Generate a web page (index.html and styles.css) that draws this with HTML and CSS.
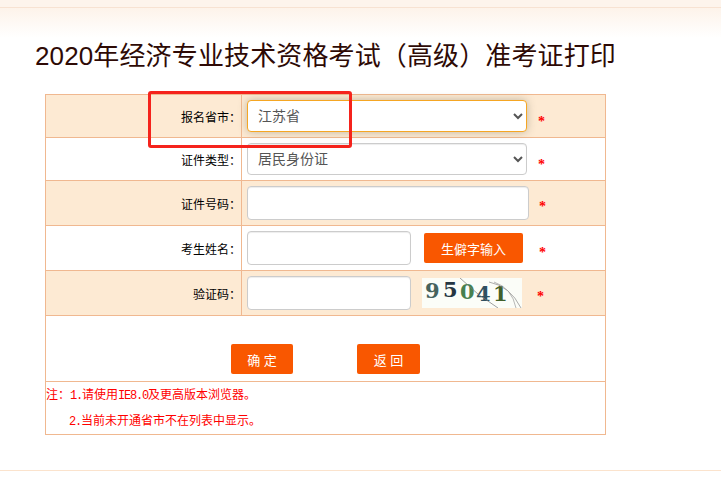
FILE: index.html
```html
<!DOCTYPE html>
<html>
<head>
    <meta charset="utf-8" />
    <title>准考证打印</title>
    <link rel="stylesheet" href="styles.css">
</head>
<body>
    <div class="top_bar"></div>
    <div class="main">
        <h1 class="title">2020年经济专业技术资格考试（高级）准考证打印</h1>
        <table class="form_tb">
            <tr class="row_a odd">
                <td class="lbl">报名省市：</td>
                <td>
                    <div class="field">
                        <select class="sel sel_on"><option>江苏省</option></select>
                        <span class="star star_a">*</span>
                    </div>
                </td>
            </tr>
            <tr class="row_a">
                <td class="lbl">证件类型：</td>
                <td>
                    <div class="field">
                        <select class="sel"><option>居民身份证</option></select>
                        <span class="star star_a">*</span>
                    </div>
                </td>
            </tr>
            <tr class="row_b odd">
                <td class="lbl">证件号码：</td>
                <td>
                    <div class="field">
                        <input class="txt txt_long" type="text" />
                        <span class="star star_b">*</span>
                    </div>
                </td>
            </tr>
            <tr class="row_c">
                <td class="lbl">考生姓名：</td>
                <td>
                    <div class="field">
                        <input class="txt" type="text" />
                        <button class="btn btn_rare" type="button">生僻字输入</button>
                        <span class="star star_c">*</span>
                    </div>
                </td>
            </tr>
            <tr class="row_c odd">
                <td class="lbl">验证码：</td>
                <td>
                    <div class="field">
                        <input class="txt" type="text" />
                        <svg class="captcha" width="100" height="30" viewBox="0 0 100 30">
                            <rect width="100" height="30" fill="#fbfdf8" />
                            <text x="3" y="20" fill="#46625c">9</text>
                            <text x="21" y="19" fill="#263642">5</text>
                            <text x="38" y="21" fill="#47804f">0</text>
                            <text x="54" y="23" fill="#2f5060">4</text>
                            <text x="71" y="23" fill="#41602a">1</text>
                            <path d="M38 0 Q56 18 76 30" fill="none" stroke="#777" stroke-width="0.7" />
                            <path d="M67 4 Q88 8 99 30" fill="none" stroke="#888" stroke-width="0.7" />
                            <path d="M72 4 Q90 10 94 30" fill="none" stroke="#999" stroke-width="0.7" />
                        </svg>
                        <span class="star star_d">*</span>
                    </div>
                </td>
            </tr>
            <tr class="row_btn">
                <td colspan="2">
                    <div class="btns">
                        <button class="btn btn_ok" type="button">确 定</button>
                        <button class="btn btn_back" type="button">返 回</button>
                    </div>
                </td>
            </tr>
            <tr class="row_note">
                <td colspan="2">
                    <p>注：<span class="en">1.</span>请使用<span class="en">IE8.0</span>及更高版本浏览器。</p>
                    <p class="note2"><span class="en">2.</span>当前未开通省市不在列表中显示。</p>
                </td>
            </tr>
        </table>
        <div class="mark"></div>
    </div>
    <div class="foot_line"></div>
</body>
</html>
```
FILE: styles.css
```css
body { margin: 0; background: #fff; font-family: "Liberation Sans", "Noto Sans CJK SC", sans-serif; font-size: 12px; color: #000; overflow: hidden; }
.top_bar { height: 7px; background: #fdf4ec; border-bottom: 1px solid #f7e2d2; }
.main { position: relative; height: 462px; padding-left: 45px; box-sizing: border-box; background: linear-gradient(#fdf3ea, #fff 30px) no-repeat; background-size: 100% 36px; }
.title { margin: 0 0 0 -10px; padding-top: 26px; height: 86px; box-sizing: border-box; font-size: 26px; line-height: 44px; letter-spacing: .13px; font-weight: normal; color: #2e0a05; font-family: "Liberation Sans", "Noto Sans CJK SC", sans-serif; }
.form_tb { width: 561px; border-collapse: collapse; table-layout: fixed; }
.form_tb td { border: 1px solid #f0b890; padding: 0; }
.form_tb td.lbl { width: 195px; text-align: right; }
.form_tb tr.odd td { background: #fdead3; }
.row_a { height: 43px; }
.row_b { height: 45px; }
.row_c { height: 45px; }
.row_btn { height: 66px; }
.row_note { height: 53px; }
.field { display: flex; align-items: center; padding-left: 5px; }
.sel { width: 280px; height: 32px; padding: 0 6px; border: 1px solid #ccc; border-radius: 4px; background: #fff; color: #555; font-size: 14px; font-family: "Liberation Sans", "Noto Sans CJK SC", sans-serif; box-shadow: inset 0 1px 1px rgba(0, 0, 0, .075); }
.sel_on { border-color: #f5a623; box-shadow: 0 0 8px rgba(120, 120, 100, .45); }
.txt { width: 164px; height: 34px; padding: 0 8px; box-sizing: border-box; border: 1px solid #ccc; border-radius: 4px; background: #fff; box-shadow: inset 0 1px 1px rgba(0, 0, 0, .075); }
.txt_long { width: 282px; }
.star { color: #f00; font-size: 14px; line-height: 14px; font-family: "Liberation Serif", serif; font-weight: bold; }
.star_a { margin: 12px 0 0 11px; }
.star_b { margin: 8px 0 0 10px; }
.star_c { margin: 10px 0 0 16px; }
.star_d { margin: 8px 0 0 15px; }
.btn { border: 0; border-radius: 2px; background: #f95700; color: #fff; font-size: 13px; font-family: "Liberation Sans", "Noto Sans CJK SC", sans-serif; padding: 0; }
.btn_rare { width: 99px; height: 30px; margin-left: 13px; }
.captcha { margin-left: 11px; }
.captcha text { font-size: 21px; font-weight: bold; font-family: "DejaVu Serif", serif; }
.btns { display: flex; gap: 64px; padding: 28px 0 0 185px; box-sizing: border-box; height: 65px; }
.btn_ok { width: 62px; height: 30px; }
.btn_back { width: 63px; height: 30px; }
.row_note { color: #f00; font-family: "Liberation Serif", "Noto Sans CJK SC", serif; }
.row_note p { margin: 0; height: 26px; line-height: 26px; }
.row_note .note2 { padding-left: 23px; }
.en { font-family: "Liberation Mono", monospace; letter-spacing: -1.2px; line-height: 1; }
.mark { position: absolute; left: 148px; top: 83px; width: 198px; height: 51px; border: 3px solid #f5231c; border-radius: 3px; }
.foot_line { height: 1px; background: #fbe3cd; }
```
